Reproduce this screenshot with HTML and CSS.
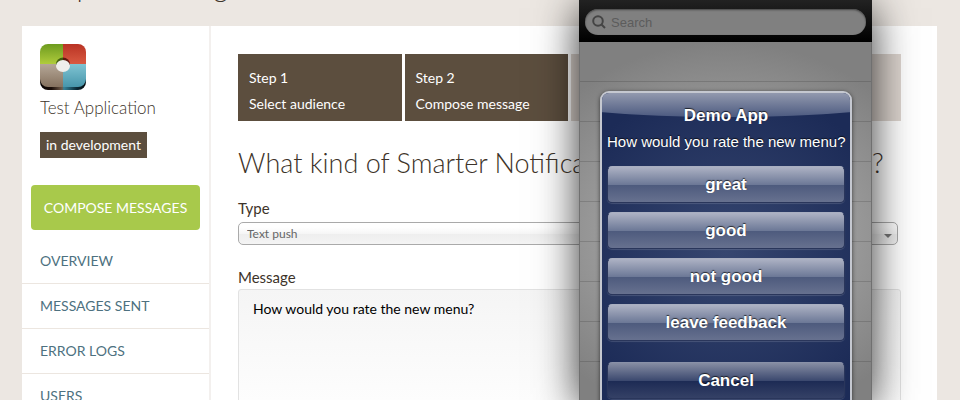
FILE: index.html
```html
<!DOCTYPE html>
<html lang="en">
<head>
<meta charset="utf-8">
<title>Compose Messages</title>
<link rel="stylesheet" href="styles.css">
</head>
<body>
<div class="page">
  <h1 class="page-title">Compose Messages</h1>
  <div class="panel">
    <aside class="sidebar">
      <div class="app">
        <svg class="app-icon" viewBox="0 0 46 46" aria-hidden="true">
          <defs>
            <linearGradient id="green" x2="0" y2="1"><stop stop-color="#6d9b1f"/><stop offset="1" stop-color="#b0cc3c"/></linearGradient>
            <linearGradient id="red" x2="0" y2="1"><stop stop-color="#b93324"/><stop offset="1" stop-color="#d95a42"/></linearGradient>
            <linearGradient id="taupe" x2="0" y2="1"><stop stop-color="#b5a797"/><stop offset="1" stop-color="#86725f"/></linearGradient>
            <linearGradient id="blue" x2="0" y2="1"><stop stop-color="#80c4d3"/><stop offset="1" stop-color="#4796ab"/></linearGradient>
            <linearGradient id="edge"><stop stop-color="#080403"/><stop offset=".25" stop-color="#1c0f0a"/><stop offset=".48" stop-color="#715b49"/><stop offset=".52" stop-color="#35839a"/><stop offset=".8" stop-color="#0b2a36"/><stop offset="1" stop-color="#03080b"/></linearGradient>
            <clipPath id="face"><rect width="46" height="43" rx="8"/></clipPath>
            <clipPath id="hole"><ellipse cx="23" cy="20.500" rx="7" ry="7"/></clipPath>
          </defs>
          <rect y="4" width="46" height="42" rx="8" fill="url(#edge)"/>
          <g clip-path="url(#face)">
            <path d="M0 0h23v20H0z" fill="url(#green)"/>
            <path d="M23 0h23v20H23z" fill="url(#red)"/>
            <path d="M0 20h23v23H0z" fill="url(#taupe)"/>
            <path d="M23 20h23v23H23z" fill="url(#blue)"/>
          </g>
          <g clip-path="url(#hole)">
            <path d="M16 13h7v8h-7z" fill="#3f5f10"/>
            <path d="M23 13h7v8h-7z" fill="#611910"/>
          </g>
          <ellipse cx="23" cy="22" rx="7" ry="6" fill="#efeeeb"/>
        </svg>
        <p class="app-name">Test Application</p>
        <span class="status">in development</span>
      </div>
      <a class="compose" href="#">COMPOSE MESSAGES</a>
      <nav class="menu">
        <a href="#">OVERVIEW</a>
        <a href="#">MESSAGES SENT</a>
        <a href="#">ERROR LOGS</a>
        <a href="#">USERS</a>
      </nav>
    </aside>
    <main class="content">
      <ol class="steps">
        <li class="step"><span>Step 1</span><span>Select audience</span></li>
        <li class="step"><span>Step 2</span><span>Compose message</span></li>
        <li class="step step-idle"></li>
        <li class="step step-idle"></li>
      </ol>
      <h2 class="question">What kind of Smarter Notification do you wish to send?</h2>
      <form class="form">
        <label for="type">Type</label>
        <div class="select-wrap">
          <select id="type"><option>Text push</option></select>
        </div>
        <label for="message">Message</label>
        <textarea id="message">How would you rate the new menu?</textarea>
      </form>
    </main>
  </div>
</div>

<section class="phone">
  <div class="search-bar">
    <div class="search">
      <svg class="search-icon" viewBox="0 0 14 14" aria-hidden="true"><circle cx="6" cy="6" r="4.800"/><path d="M9.500 9.500 13 13"/></svg>
      <input type="search" placeholder="Search" aria-label="Search">
    </div>
  </div>
  <div class="list">
    <div class="dialog" role="dialog" aria-labelledby="dialog-title">
      <h3 id="dialog-title">Demo App</h3>
      <p>How would you rate the new menu?</p>
      <div class="choices">
        <button type="button">great</button>
        <button type="button">good</button>
        <button type="button">not good</button>
        <button type="button">leave feedback</button>
      </div>
      <button class="cancel" type="button">Cancel</button>
    </div>
  </div>
</section>
</body>
</html>
```

FILE: styles.css
```css
* {
  box-sizing: border-box;
}

body {
  margin: 0;
  height: 100vh;
  overflow: hidden;
  position: relative;
  background: #ece7e2;
  color: #3d3329;
  font-family: Lato, "Open Sans", sans-serif;
  font-size: 14px;
}

h1, h2, h3, p, ol {
  margin: 0;
  padding: 0;
}

a {
  text-decoration: none;
}

.page {
  padding: 0 23px 0 22px;
}

.page-title {
  margin: -29px 0 23px;
  font-size: 27px;
  font-weight: 300;
  line-height: 32px;
}

.panel {
  display: flex;
  min-height: 100vh;
  background: #fff;
}

/* Sidebar */
.sidebar {
  flex: 0 0 189px;
  border-right: 2px solid #f3f0ee;
}

.app {
  padding: 18px 18px 0;
}

.app-icon {
  display: block;
  width: 46px;
  height: 46px;
}

.app-name {
  margin: 6px 0 12px;
  font-size: 17px;
  font-weight: 300;
  line-height: 24px;
}

.status {
  display: inline-block;
  padding: 0 6px;
  background: #5c4e3e;
  color: #fff;
  line-height: 26px;
}

.compose {
  display: block;
  margin: 27px 9px 9px;
  border-radius: 4px;
  background: #a8c94b;
  color: #fff;
  line-height: 45px;
  text-align: center;
}

.menu a {
  display: block;
  padding-left: 18px;
  border-bottom: 1px solid #ece6e0;
  color: #4d7180;
  line-height: 44px;
}

/* Compose form */
.content {
  flex: 1;
  min-width: 0;
  padding: 28px 36px 0 27px;
}

.steps {
  display: grid;
  grid-template-columns: repeat(4, 1fr);
  gap: 3px;
  list-style: none;
}

.step {
  min-height: 67px;
  padding: 11px 11px 4px;
  background: #5c4e3e;
  color: #fff;
}

.step span {
  display: block;
  line-height: 26px;
}

.step-idle {
  background: #ddd5cf;
}

.question {
  margin: 24px 0 15px;
  font-size: 27px;
  font-weight: 300;
  line-height: 36px;
  white-space: nowrap;
}

.form label {
  display: block;
  font-size: 15px;
  line-height: 24px;
}

.select-wrap {
  position: relative;
  margin: 2px 3px 20px 0;
}

.select-wrap::after {
  content: "";
  position: absolute;
  right: 6px;
  top: 12px;
  border: 4px solid transparent;
  border-top-color: #777;
  border-bottom: 0;
}

.form select {
  display: block;
  width: 100%;
  height: 23px;
  padding: 0 8px;
  appearance: none;
  border: 1px solid #aaa;
  border-radius: 5px;
  background: linear-gradient(#fff 20%, #f6f6f6 50%, #eee 52%, #f4f4f4);
  color: #666;
  font: 12px Lato, sans-serif;
}

.form textarea {
  display: block;
  width: 100%;
  height: 160px;
  padding: 9px 14px;
  border: 1px solid #e2e2e2;
  border-radius: 3px;
  background: linear-gradient(#f5f5f5, #fdfdfd 110px);
  color: #000;
  font: 14px/20px Lato, sans-serif;
  resize: none;
}

/* Phone preview, floating over the page */
.phone {
  position: absolute;
  top: 0;
  bottom: 0;
  right: 88px;
  width: 293px;
  box-shadow: 0 8px 40px rgba(0, 0, 0, 0.8);
  font-family: "Liberation Sans", Arial, sans-serif;
}

.search-bar {
  padding: 9px 6px 7px;
  background: linear-gradient(#222, #000);
}

.search {
  display: flex;
  align-items: center;
  gap: 5px;
  height: 26px;
  padding: 0 7px;
  border-radius: 13px;
  background: #808080;
  box-shadow: inset 0 1px 2px #444;
}

.search-icon {
  width: 14px;
  height: 14px;
  fill: none;
  stroke: #444;
  stroke-width: 2;
}

.search input {
  flex: 1;
  min-width: 0;
  padding: 0;
  border: 0;
  background: none;
  font: 13px "Liberation Sans", Arial, sans-serif;
}

.search input::placeholder {
  color: #5c5c5c;
}

.list {
  height: 100%;
  padding: 49px 20px 0 21px;
  box-shadow: inset 1px 0 #707070, inset -1px 0 #707070;
  background:
    repeating-linear-gradient(transparent 0 39px, rgba(0, 0, 0, 0.14) 39px 40px),
    radial-gradient(220px 190px at 50% 190px, #bbb, #808080);
}

.dialog {
  position: relative;
  overflow: hidden;
  min-height: 400px;
  padding: 12px 5px;
  border: 2px solid #c5c8d0;
  border-radius: 9px;
  background: radial-gradient(circle at 50% 160px, #364670 0, #1c2b57 170px);
  box-shadow: 0 1px 4px rgba(0, 0, 0, 0.6);
  color: #fff;
  text-align: center;
  text-shadow: 0 -1px 1px rgba(0, 0, 0, 0.7);
}

.dialog::before {
  content: "";
  position: absolute;
  left: -20%;
  right: -20%;
  top: -40px;
  height: 64px;
  border-radius: 0 0 50% 50% / 0 0 16px 16px;
  background: linear-gradient(#9299ae 40px, #4c5a80);
}

.dialog h3 {
  position: relative;
  font-size: 17px;
  line-height: 22px;
}

.dialog p {
  position: relative;
  margin: 5px 0 14px;
  font-size: 15px;
  line-height: 20px;
  white-space: nowrap;
}

.choices {
  display: grid;
  gap: 9px;
  margin-bottom: 21px;
}

.dialog button {
  display: block;
  width: 100%;
  height: 37px;
  padding: 0;
  border: 1px solid #2a365b;
  border-top-color: #a9afc1;
  border-radius: 5px;
  background: linear-gradient(#adb2c4, #6d7997 50%, #4d5a7d 51%, #67718f);
  box-shadow: 0 1px 1px rgba(255, 255, 255, 0.15);
  color: #fff;
  font: bold 17px "Liberation Sans", Arial, sans-serif;
  text-shadow: 0 -1px 1px rgba(0, 0, 0, 0.7);
}

.dialog .cancel {
  border-top-color: #8991a8;
  background: linear-gradient(#868da3, #3c496f 50%, #1c2a54 51%, #354166);
}
```
